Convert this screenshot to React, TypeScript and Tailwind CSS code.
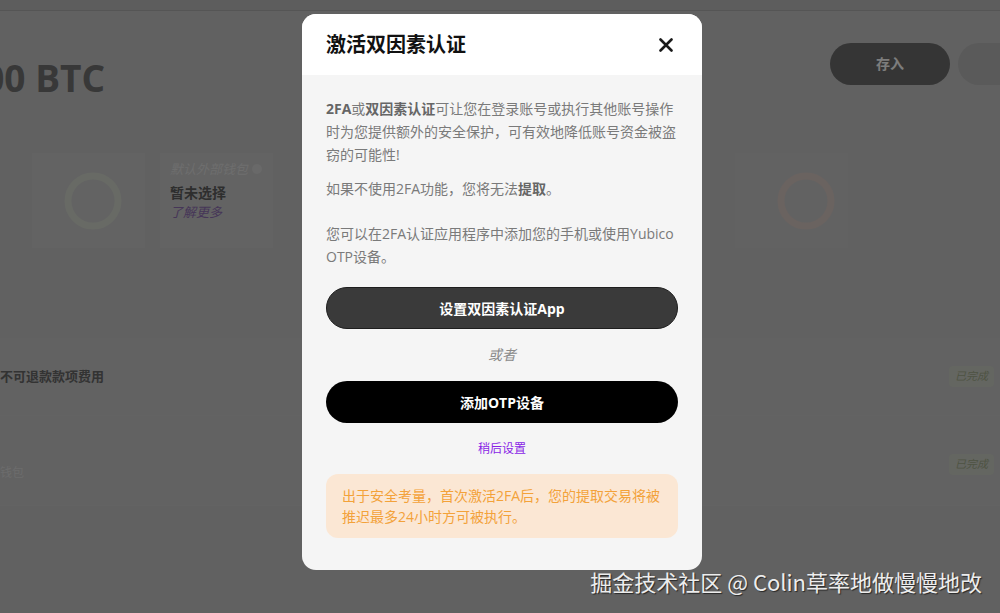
import { useState } from 'react';

const font = 'font-["Open_Sans","Noto_Sans_CJK_SC",sans-serif]';

function Ring({ color }: { color: string }) {
  return (
    <svg width="58" height="58" viewBox="0 0 58 58">
      <circle cx="29" cy="29" r="25" fill="none" stroke={color} strokeWidth="7" />
    </svg>
  );
}

function DoneBadge() {
  return (
    <span className="rounded px-1.5 py-0.5 text-[11px] italic text-[#9ea888] bg-[#c8ccc2]">已完成</span>
  );
}

export default function App() {
  const [open, setOpen] = useState(true);

  return (
    <div className={`relative h-[613px] w-[1000px] overflow-hidden bg-[#c2c2c2] ${font}`}>
      {/* page under the modal */}
      <div className="h-[11px] border-b border-[#aaaaaa] bg-[#bababa]" />

      <div className="flex items-start justify-between pt-[32px]">
        <div className="flex w-[105px] justify-end">
          <div className="whitespace-nowrap pt-[13px] text-[37px] font-bold leading-[44px] text-[#707070]">0.00 BTC</div>
        </div>
        <div className="flex gap-2 -mr-[78px]">
          <button className="h-[42px] w-[120px] rounded-full bg-[#6a6a6a] text-sm font-bold text-[#fafafa]">存入</button>
          <button className="h-[42px] w-[120px] rounded-full bg-[#b4b4b4] text-sm font-bold text-white">提取</button>
        </div>
      </div>

      <div className="mt-[53px] flex gap-[15px] pl-[32px]">
        <div className="flex h-[95px] w-[113px] items-center justify-center bg-[#c6c6c6] pl-[8px]">
          <Ring color="#d0d4cb" />
        </div>
        <div className="h-[95px] w-[113px] bg-[#c6c6c6] pl-[10px] pt-[7px]">
          <div className="flex items-center gap-1 text-[13px] italic leading-[18px] text-[#dcdcdc]">
            默认外部钱包 <span className="h-[10px] w-[10px] rounded-full bg-[#d2d2d2]" />
          </div>
          <div className="mt-[6px] text-[14px] font-bold leading-[18px] text-[#5c5c5c]">暂未选择</div>
          <div className="mt-[2px] text-[13px] italic leading-[16px] text-[#8c6cb0]">了解更多</div>
        </div>
        <div className="ml-[447px] flex h-[95px] w-[113px] items-center justify-center bg-[#c5c5c5] pl-[28px]">
          <Ring color="#d4c6c0" />
        </div>
      </div>

      <div className="mt-[90px] flex h-[78px] items-center justify-between border-b border-[#c6c6c6] bg-[#c4c4c4] pr-[6px]">
        <div className="text-[13px] font-bold text-[#666666]">不可退款款项费用</div>
        <DoneBadge />
      </div>
      <div className="flex h-[90px] items-start justify-between border-b border-[#c6c6c6] bg-[#c4c4c4] pr-[6px] pt-[38px]">
        <div className="pt-[10px] text-[12px] text-[#d8d8d8]">钱包</div>
        <DoneBadge />
      </div>

      {/* overlay + modal */}
      {open && (
        <div className="absolute inset-0 flex justify-center bg-black/50 pl-[4px] pt-[14px]">
          <div className="h-fit w-[400px] overflow-hidden rounded-[14px] bg-[#f5f5f5]">
            <div className="flex h-[61px] items-center justify-between bg-white pl-6 pr-[29px]">
              <h2 className="text-[20px] font-bold text-[#111]">激活双因素认证</h2>
              <button onClick={() => setOpen(false)} aria-label="close">
                <svg width="14" height="14" viewBox="0 0 14 14">
                  <path d="M1.5 1.5 L12.5 12.5 M12.5 1.5 L1.5 12.5" stroke="#1a1a1a" strokeWidth="2.6" strokeLinecap="round" />
                </svg>
              </button>
            </div>

            <div className="px-6 pb-[32px] pt-[22px] text-[14px] leading-[23px] text-[#7a7a7a]">
              <p>
                <b className="text-[#666]">2FA</b>或<b className="text-[#666]">双因素认证</b>可让您在登录账号或执行其他账号操作时为您提供额外的安全保护，可有效地降低账号资金被盗窃的可能性!
              </p>
              <p className="mt-[11px]">
                如果不使用2FA功能，您将无法<b className="text-[#666]">提取</b>。
              </p>
              <p className="mt-[22px]">
                您可以在2FA认证应用程序中添加您的手机或使用Yubico
                <br />
                OTP设备。
              </p>

              <button className="mt-[19px] h-[42px] w-full rounded-full border border-[#1e1e1e] bg-[#3a3a3a] text-[14px] font-bold text-white">
                设置双因素认证App
              </button>
              <div className="mt-[16px] text-center italic leading-[20px] text-[#8a8a8a]">或者</div>
              <button className="mt-[16px] h-[42px] w-full rounded-full bg-black text-[14px] font-bold text-white">
                添加OTP设备
              </button>
              <div className="mt-[17px] text-center text-[12px] leading-[18px] text-[#8a1fe6]">稍后设置</div>

              <div className="mt-[16px] rounded-[12px] bg-[#fbe7d4] px-4 py-[11px] leading-[21px] text-[#f3a23a]">
                出于安全考量，首次激活2FA后，您的提取交易将被
                <br />
                推迟最多24小时方可被执行。
              </div>
            </div>
          </div>
        </div>
      )}

      {/* watermark */}
      <div className="absolute right-[18px] top-[567px] whitespace-nowrap font-['Noto_Sans_CJK_SC',sans-serif] text-[22px] leading-[28px] text-[#ededed] [text-shadow:1px_1px_1px_rgba(0,0,0,0.6)]">
        掘金技术社区 @ Colin草率地做慢慢地改
      </div>
    </div>
  );
}
